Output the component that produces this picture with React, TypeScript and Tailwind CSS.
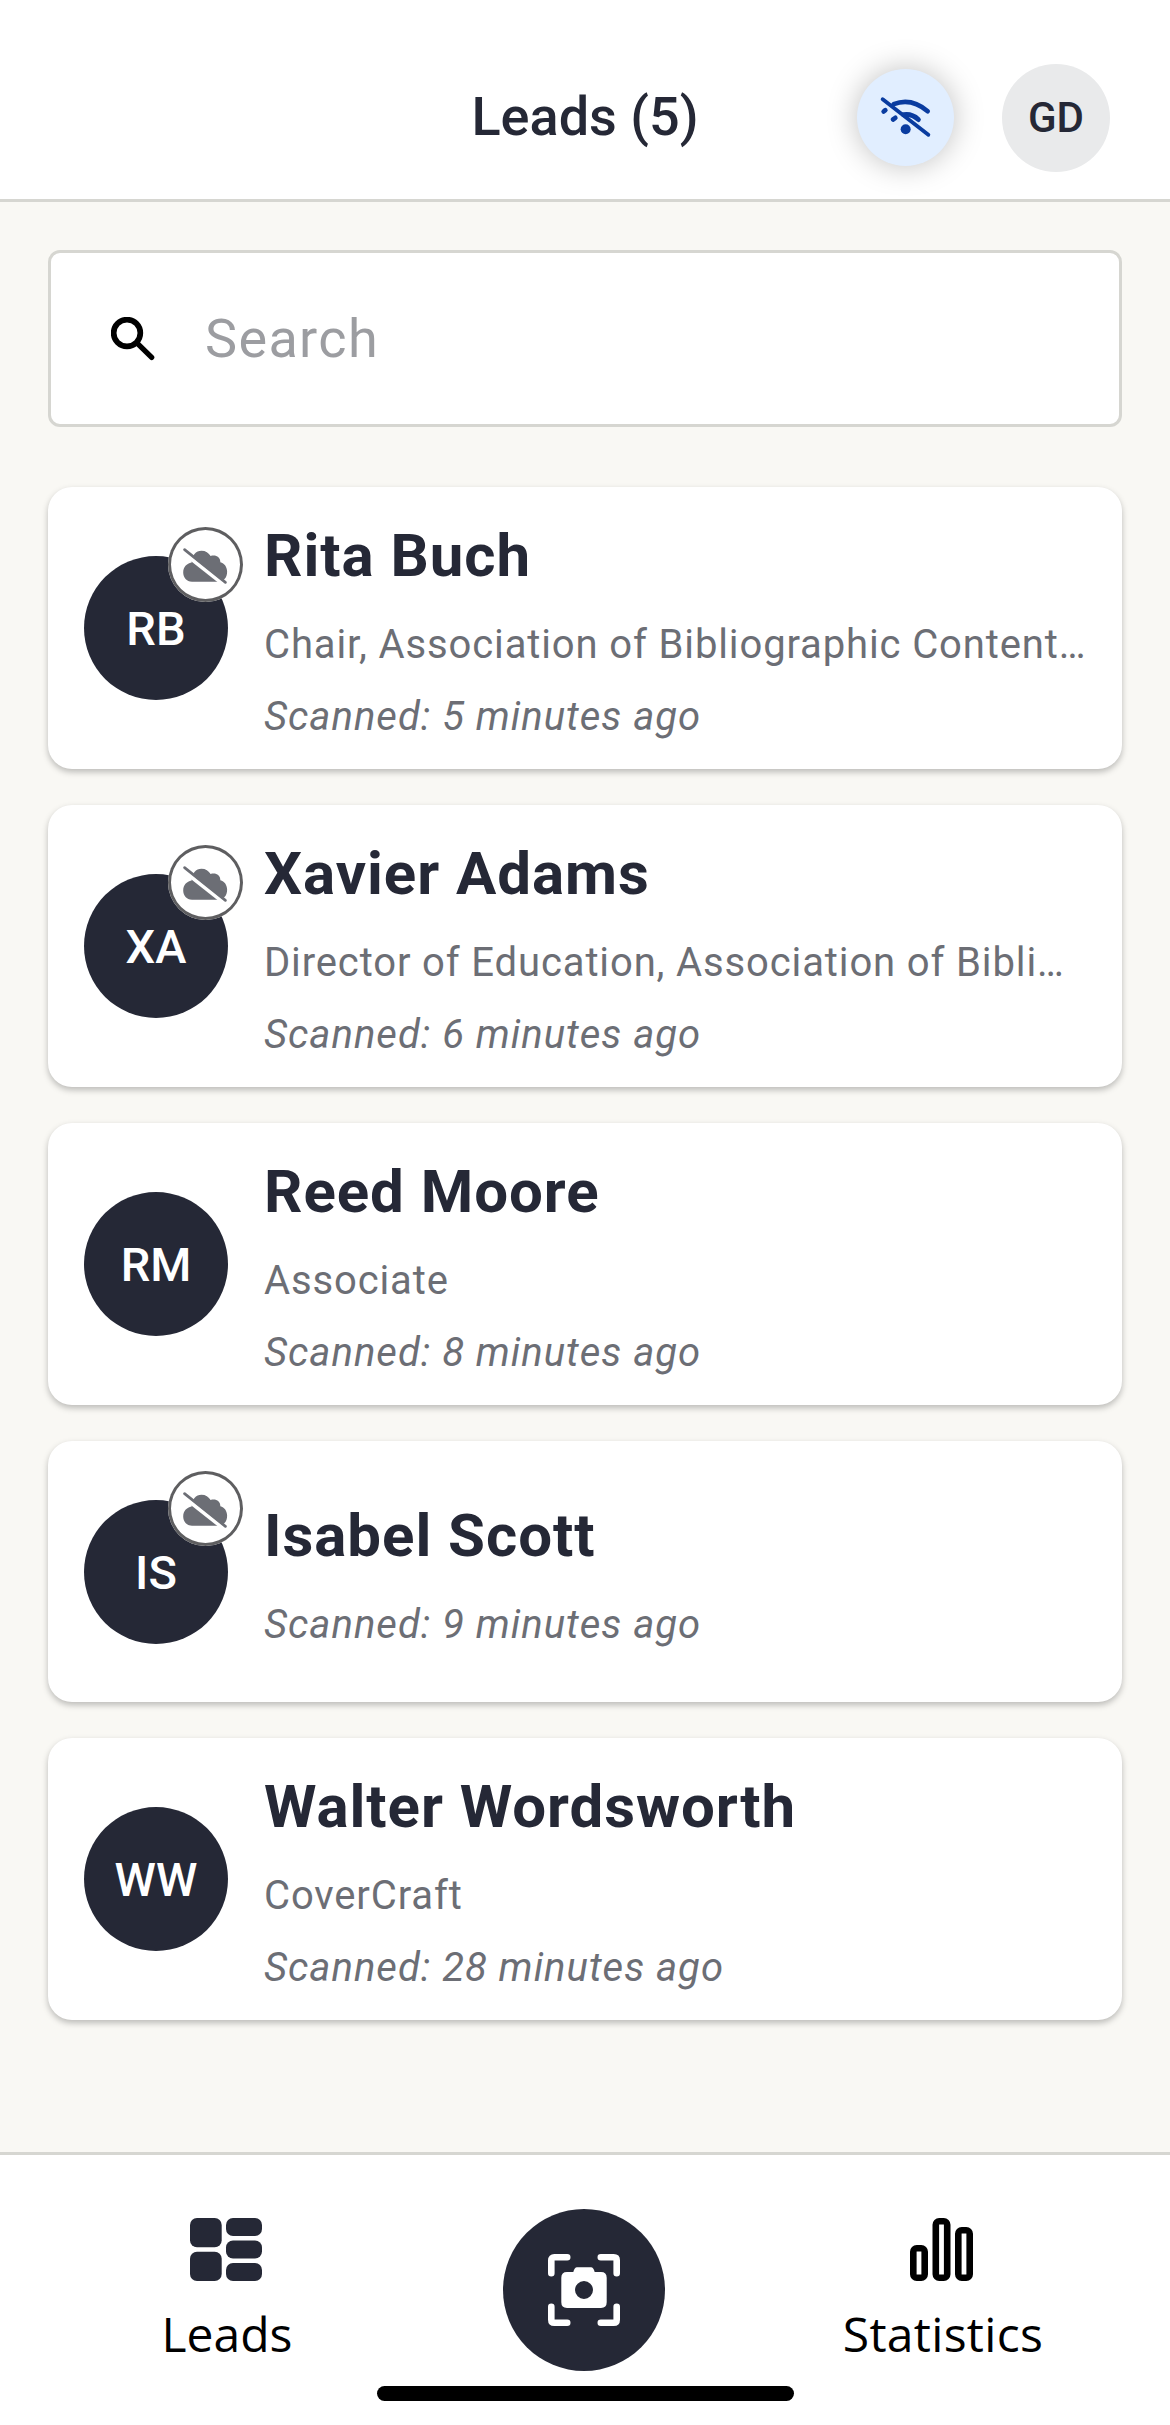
const leads = [
  { initials: "RB", name: "Rita Buch", detail: "Chair, Association of Bibliographic Content…", time: "5 minutes ago", offline: true },
  { initials: "XA", name: "Xavier Adams", detail: "Director of Education, Association of Bibli…", time: "6 minutes ago", offline: true },
  { initials: "RM", name: "Reed Moore", detail: "Associate", time: "8 minutes ago", offline: false },
  { initials: "IS", name: "Isabel Scott", detail: "", time: "9 minutes ago", offline: true },
  { initials: "WW", name: "Walter Wordsworth", detail: "CoverCraft", time: "28 minutes ago", offline: false },
];

function WifiOffIcon() {
  return (
    <svg className="h-full w-full" viewBox="112 88 291 290" fill="none" stroke="#0a3ca0" strokeLinecap="round">
      <path d="M222 193 Q274 172 324 214" strokeWidth="14" />
      <path d="M252 225 Q276 221 296 239" strokeWidth="15" />
      <path d="M192 215 L197 211" strokeWidth="14" />
      <path d="M220 239 L227 234" strokeWidth="14" />
      <circle cx="258" cy="268" r="15" fill="#0a3ca0" stroke="none" />
      <path d="M189 178 L326 285" strokeWidth="11.5" />
    </svg>
  );
}

function CloudOffIcon() {
  return (
    <svg className="h-full w-full" viewBox="386 173 222 222">
      <path
        d="M457 335 C441 335 431 323 431 308 C431 291 441 281 456 278 C456 257 469 243 485 243 C497 243 507 249 512 259 C527 254 541 262 541 277 C553 280 561 291 561 305 C561 323 551 335 535 335 Z"
        fill="#6c6e75"
      />
      <path d="M428 246 L551 343" stroke="#fff" strokeWidth="12" />
      <path d="M435 240 L556 337" stroke="#6c6e75" strokeWidth="8" strokeLinecap="round" />
    </svg>
  );
}

function SearchIcon() {
  return (
    <svg className="h-[44px] w-[44px]" viewBox="242 261 132 132" fill="none" stroke="#000" strokeLinecap="round">
      <circle cx="290" cy="309" r="40" strokeWidth="17" />
      <path d="M321 340 L364 382" strokeWidth="16" />
    </svg>
  );
}

function LeadsIcon() {
  return (
    <svg className="-ml-[2px] h-[63px] w-[72px]" viewBox="0 0 72 63" fill="#252836">
      <rect width="31.7" height="29.2" rx="7" />
      <rect y="33.8" width="31.7" height="29.2" rx="7" />
      <rect x="36" width="36" height="18" rx="7" />
      <rect x="36" y="22.5" width="36" height="18" rx="7" />
      <rect x="36" y="45" width="36" height="18" rx="7" />
    </svg>
  );
}

function StatisticsIcon() {
  return (
    <svg className="h-[63px] w-[63px]" viewBox="0 0 63 63" fill="none" stroke="#000" strokeWidth="6.6">
      <rect x="3.3" y="30.3" width="11.4" height="29.4" rx="3.4" />
      <rect x="25.8" y="3.3" width="11.4" height="56.4" rx="3.4" />
      <rect x="48.3" y="12.3" width="11.4" height="47.4" rx="3.4" />
    </svg>
  );
}

function ScanIcon() {
  return (
    <svg className="h-[72px] w-[72px]" viewBox="0 0 72 72" fill="none" stroke="#fff" strokeWidth="6.6" strokeLinecap="round">
      <path d="M3.3 19.2 V6.3 Q3.3 3.3 6.3 3.3 H19.2" />
      <path d="M52.8 3.3 H65.7 Q68.7 3.3 68.7 6.3 V19.2" />
      <path d="M3.3 52.8 V65.7 Q3.3 68.7 6.3 68.7 H19.2" />
      <path d="M52.8 68.7 H65.7 Q68.7 68.7 68.7 65.7 V52.8" />
      <path
        fill="#fff"
        stroke="none"
        fillRule="evenodd"
        d="M29 13.3 H43 Q45.5 13.3 46.7 18 H53 Q58.7 18 58.7 23.7 V48.3 Q58.7 54 53 54 H19 Q13.3 54 13.3 48.3 V23.7 Q13.3 18 19 18 H25.3 Q26.5 13.3 29 13.3 Z M36 27 A9 9 0 1 0 36 45 A9 9 0 1 0 36 27 Z"
      />
    </svg>
  );
}

export default function App() {
  return (
    <div className="flex h-[2425px] w-[1170px] flex-col bg-[#f9f8f4] font-[Roboto,sans-serif] text-[#252836]">
      <header className="grid h-[202px] shrink-0 grid-cols-[1fr_auto_1fr] items-center border-b-3 border-[#d6d6d1] bg-white pt-[36px] pr-[60px]">
        <div />
        <h1 className="ml-[60px] pb-[2px] text-[54px] leading-[63px] font-medium">Leads (5)</h1>
        <div className="flex items-center justify-end gap-12">
          <div className="size-[97px] rounded-full bg-[#e1eeff] shadow-[0_0_30px_rgba(0,0,0,0.25)]">
            <WifiOffIcon />
          </div>
          <div className="flex size-[108px] items-center justify-center rounded-full bg-[#e9eaeb] text-[42px] font-medium">GD</div>
        </div>
      </header>

      <main className="flex flex-1 flex-col px-12 pt-12">
        <div className="flex h-[177px] items-center rounded-xl border-3 border-[#d6d6d1] bg-white pl-[60px] text-[54px] tracking-[1.35px] text-[#9c9da1]">
          <SearchIcon />
          <span className="ml-[50px]">Search</span>
        </div>

        <ul className="mt-[60px] flex flex-col gap-9">
          {leads.map((lead) => (
            <li
              key={lead.name}
              className="flex min-h-[261px] items-center gap-9 rounded-3xl bg-white px-9 py-[18px] shadow-[0_3px_6px_rgba(0,0,0,0.25)]"
            >
              <div className="relative flex size-36 shrink-0 items-center justify-center rounded-full bg-[#252836] pt-[3px] text-[47px] font-medium text-white">
                {lead.initials}
                {lead.offline && (
                  <div className="absolute -top-[29px] -right-[15px] size-[75px] rounded-full bg-white ring-3 ring-[#5e5e60] ring-inset">
                    <CloudOffIcon />
                  </div>
                )}
              </div>
              <div className="min-w-0 whitespace-nowrap">
                <h2 className="text-[60px] leading-[102px] font-bold tracking-[0.95px]">{lead.name}</h2>
                {lead.detail && <p className="-mb-[2px] pt-[2px] text-[40px] leading-[72px] tracking-[0.87px] text-[#6c6e75]">{lead.detail}</p>}
                <p className="-mb-[2px] pt-[2px] text-[40px] leading-[72px] tracking-[1px] text-[#6c6e75] italic">Scanned: {lead.time}</p>
              </div>
            </li>
          ))}
        </ul>
      </main>

      <footer className="flex h-[273px] shrink-0 flex-col items-center border-t-3 border-[#d6d6d1] bg-white">
        <nav className="grid h-[231px] w-full grid-cols-[454px_260px_456px] justify-items-center font-['Open_Sans',sans-serif] text-[48px] leading-[66px] font-[380] text-black">
          <div className="flex flex-col items-center pt-[63px]">
            <LeadsIcon />
            <span className="mt-[20px]">Leads</span>
          </div>
          <div className="mt-[54px] flex size-[162px] items-center justify-center rounded-full bg-[#252836]">
            <ScanIcon />
          </div>
          <div className="flex flex-col items-center pt-[63px]">
            <StatisticsIcon />
            <span className="mt-[20px] ml-[2px] tracking-[0.3px]">Statistics</span>
          </div>
        </nav>
        <div className="h-[15px] w-[417px] rounded-full bg-black" />
      </footer>
    </div>
  );
}
